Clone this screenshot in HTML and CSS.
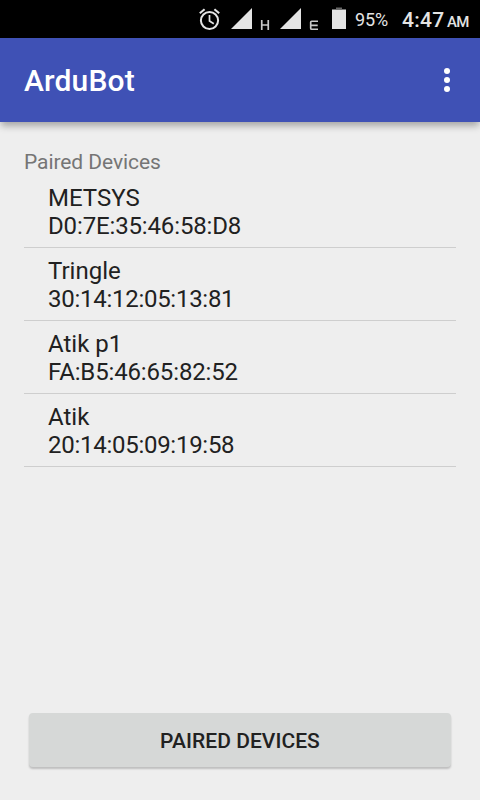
FILE: index.html
```html
<!DOCTYPE html>
<html lang="en">
<head>
<meta charset="utf-8">
<title>ArduBot</title>
<link rel="stylesheet" href="styles.css">
</head>
<body>
<div class="status-bar">
  <svg class="status-icons" width="148" height="38" viewBox="0 0 148 38" aria-hidden="true">
    <g fill="none" stroke="#e4e4e4">
      <circle cx="11.5" cy="20.5" r="8.6" stroke-width="2"/>
      <path d="M11.5 15v6l4.3 2.8" stroke-width="1.7"/>
      <path d="M1.8 13.2l4.8-4M21.2 13.2l-4.8-4" stroke-width="2.1"/>
    </g>
    <g fill="#e4e4e4">
      <path d="M54 8v21H33zM103 8v21H82z"/>
      <path d="M134 9.5h14v19.5h-14z"/>
    </g>
    <path d="M138 7.5h6v2h-6z" fill="#666"/>
    <g fill="none" stroke="#c8c8c8" stroke-width="1.7">
      <path d="M63.75 20v10M70.25 20v10M63.5 25h7"/>
      <path d="M120 21.25h-6.3q-1 0-1 1v6q0 1 1 1h6.3M112.7 25.3h7"/>
    </g>
  </svg>
  <span class="battery-level">95%</span>
  <span class="clock">4:47</span>
  <span class="meridiem">AM</span>
</div>
<header class="app-bar">
  <h1 class="title">ArduBot</h1>
  <svg class="overflow" width="6" height="24" viewBox="0 0 6 24" fill="#fff" aria-label="More options">
    <circle cx="3" cy="3" r="3"/><circle cx="3" cy="12" r="3"/><circle cx="3" cy="21" r="3"/>
  </svg>
</header>
<main class="content">
  <h2 class="label">Paired Devices</h2>
  <ul class="devices">
    <li class="device">METSYS<br><span class="address">D0:7E:35:46:58:D8</span></li>
    <li class="device">Tringle<br><span class="address numeric">30:14:12:05:13:81</span></li>
    <li class="device">Atik p1<br><span class="address">FA:B5:46:65:82:52</span></li>
    <li class="device">Atik<br><span class="address numeric">20:14:05:09:19:58</span></li>
  </ul>
  <button class="action" type="button">PAIRED DEVICES</button>
</main>
</body>
</html>
```
FILE: styles.css
```css
* {
  box-sizing: border-box;
}

body {
  margin: 0;
  height: 800px;
  display: flex;
  flex-direction: column;
  overflow: hidden;
  background: #eee;
  color: #212121;
  font-family: Roboto, sans-serif;
}

.status-bar {
  height: 38px;
  flex: none;
  display: flex;
  padding-left: 198px;
  background: #000;
  color: #e4e4e4;
  line-height: 38px;
  white-space: nowrap;
}

.status-icons {
  flex: none;
}

.battery-level {
  width: 47px;
  padding: 1px 0 0 9px;
  font-size: 18px;
  letter-spacing: -0.15px;
}

.clock {
  width: 47px;
  padding: 1px 0 0 9px;
  font-size: 21px;
  font-weight: 500;
  letter-spacing: 0.3px;
}

.battery-level,
.clock,
.meridiem {
  flex: none;
}

.meridiem {
  padding: 3px 0 0 7px;
  font-size: 15px;
  font-weight: 500;
  letter-spacing: -0.7px;
}

.app-bar {
  position: relative;
  height: 84px;
  flex: none;
  display: flex;
  align-items: center;
  justify-content: space-between;
  padding: 0 30px 0 24px;
  background: #3f51b5;
  color: #fff;
  box-shadow: 0 5px 7px -1px rgba(0, 0, 0, 0.3);
}

.title {
  margin: 0;
  padding-top: 2px;
  font-size: 30px;
  font-weight: 500;
  line-height: 36px;
  letter-spacing: 0.15px;
}

.content {
  flex: 1;
  display: flex;
  flex-direction: column;
  padding: 27px 24px 33px;
}

.label {
  margin: 0;
  color: #757575;
  font-size: 21px;
  font-weight: 400;
  line-height: 26px;
  letter-spacing: -0.07px;
}

.devices {
  margin: 0;
  padding: 0;
  list-style: none;
}

.device {
  height: 73px;
  padding: 9px 24px 7px;
  border-bottom: 1px solid #cecece;
  font-size: 24px;
  line-height: 28px;
}

.address {
  letter-spacing: -0.14px;
}

.address.numeric {
  letter-spacing: -0.27px;
}

.action {
  height: 54px;
  margin: auto 5px 0;
  padding: 2px 0 0;
  border: 0;
  border-radius: 4px;
  background: #d6d8d7;
  color: #212121;
  font: 500 21px/52px Roboto, sans-serif;
  letter-spacing: 0.05px;
  box-shadow: 0 2px 2px rgba(0, 0, 0, 0.2);
}
```
